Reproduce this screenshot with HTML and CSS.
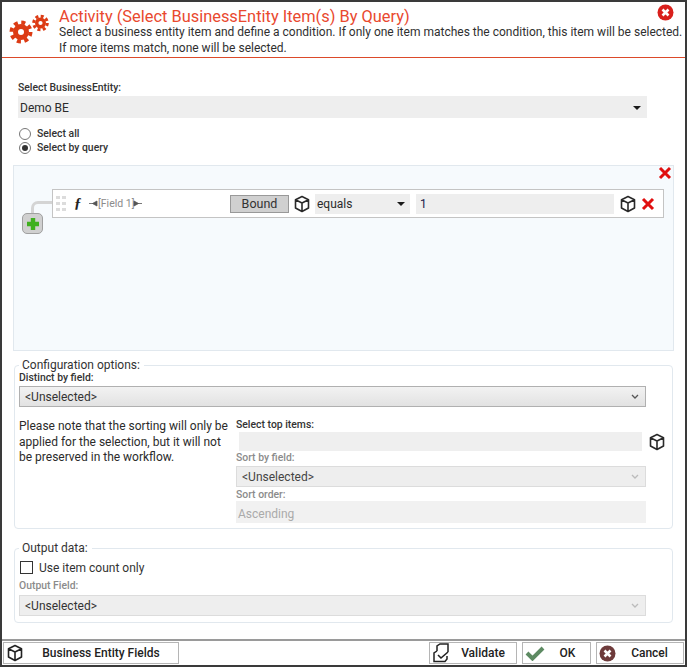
FILE: index.html
```html
<!DOCTYPE html>
<html lang="en">
<head>
<meta charset="utf-8">
<title>Activity</title>
<link rel="stylesheet" href="styles.css">
</head>
<body>
<svg width="0" height="0" class="defs">
  <symbol id="cube" viewBox="0 0 18 18"><path d="M9 1.500 15.500 4.800V13L9 16.500 2.500 13V4.800ZM3 5 9 8 15 5M9 8V16.500" fill="none" stroke="currentColor" stroke-width="1.600" stroke-linejoin="round"/></symbol>
  <symbol id="redx" viewBox="0 0 14 14"><path d="M2 2 12 12M12 2 2 12" fill="none" stroke="#e00f0f" stroke-width="3"/></symbol>
  <symbol id="chev" viewBox="0 0 8 6"><path d="M1 1 4 4 7 1" fill="none" stroke="currentColor" stroke-width="1.300"/></symbol>
  <symbol id="pin-r" viewBox="0 0 9 7"><path d="M0 3.500H5M3.500 3.500 8 1V6Z" fill="#555" stroke="#555" stroke-width=".8"/></symbol>
  <symbol id="pin-l" viewBox="0 0 9 7"><path d="M9 3.500H4M5.500 3.500 1 1V6Z" fill="#555" stroke="#555" stroke-width=".8"/></symbol>
</svg>
<div class="window">
  <header class="head">
    <svg class="gears" width="50" height="36" viewBox="0 0 50 36">
      <g fill="none" stroke="#dc3b14">
        <circle cx="13" cy="21" r="5.500" stroke-width="5"/>
        <circle cx="13" cy="21" r="9.500" stroke-width="4" stroke-dasharray="4 3.460"/>
        <circle cx="32.500" cy="12" r="3.800" stroke-width="3.400"/>
        <circle cx="32.500" cy="12" r="6.800" stroke-width="3" stroke-dasharray="3 2.340"/>
      </g>
    </svg>
    <div class="head-text">
      <h1 class="title">Activity (Select BusinessEntity Item(s) By Query)</h1>
      <p class="desc">Select a business entity item and define a condition. If only one item matches the condition, this item will be selected. If more items match, none will be selected.</p>
    </div>
    <svg class="close" width="17" height="17" viewBox="0 0 17 17"><circle cx="8.500" cy="8.500" r="8" fill="#d9201c"/><path d="M5.500 5.500 11.500 11.500M11.500 5.500 5.500 11.500" stroke="#fff" stroke-width="2.600"/></svg>
  </header>

  <main class="body">
    <label class="lbl">Select BusinessEntity:</label>
    <div class="flat-select be"><span>Demo BE</span><i class="caret"></i></div>
    <div class="radios">
      <div class="radio-row"><span class="radio"></span><span class="lbl">Select all</span></div>
      <div class="radio-row"><span class="radio on"></span><span class="lbl">Select by query</span></div>
    </div>

    <section class="query">
      <svg class="panel-x" width="14" height="14"><use href="#redx"/></svg>
      <div class="qrow-wrap">
        <div class="connector"></div>
        <div class="add"><svg width="16" height="16" viewBox="0 0 16 16"><path d="M8 2V14M2 8H14" stroke="#3fb01f" stroke-width="4.400"/></svg></div>
        <div class="qrow">
          <svg class="grip" width="10" height="15" viewBox="0 0 10 15"><path d="M0 0H4V3H0ZM6 0H10V3H6ZM0 6H4V9H0ZM6 6H10V9H6ZM0 12H4V15H0ZM6 12H10V15H6Z" fill="#dcdcdc"/></svg>
          <span class="fx">ƒ</span>
          <span class="field"><svg class="pin" width="9" height="7"><use href="#pin-r"/></svg>[Field 1]<svg class="pin" width="9" height="7"><use href="#pin-l"/></svg></span>
          <span class="bound">Bound</span>
          <svg class="cube" width="18" height="18"><use href="#cube"/></svg>
          <div class="flat-select op"><span>equals</span><i class="caret"></i></div>
          <div class="value">1</div>
          <svg class="cube" width="18" height="18"><use href="#cube"/></svg>
          <svg class="row-x" width="14" height="14"><use href="#redx"/></svg>
        </div>
      </div>
    </section>

    <fieldset class="group config">
      <legend>Configuration options:</legend>
      <label class="lbl tight">Distinct by field:</label>
      <div class="combo"><span>&lt;Unselected&gt;</span><svg width="8" height="6" class="chev"><use href="#chev"/></svg></div>
      <div class="split">
        <p class="note">Please note that the sorting will only be applied for the selection, but it will not be preserved in the workflow.</p>
        <div class="side">
          <label class="lbl">Select top items:</label>
          <div class="top-row"><div class="input"></div><svg class="cube" width="18" height="18"><use href="#cube"/></svg></div>
          <label class="lbl dim">Sort by field:</label>
          <div class="combo off"><span>&lt;Unselected&gt;</span><svg width="8" height="6" class="chev"><use href="#chev"/></svg></div>
          <label class="lbl dim order-lbl">Sort order:</label>
          <div class="input order">Ascending</div>
        </div>
      </div>
    </fieldset>

    <fieldset class="group output">
      <legend>Output data:</legend>
      <div class="check-row"><span class="check"></span><span>Use item count only</span></div>
      <label class="lbl dim">Output Field:</label>
      <div class="combo off"><span>&lt;Unselected&gt;</span><svg width="8" height="6" class="chev"><use href="#chev"/></svg></div>
    </fieldset>
  </main>

  <footer class="foot">
    <button class="btn fields"><svg class="ico" width="18" height="18"><use href="#cube"/></svg><span>Business Entity Fields</span></button>
    <span class="spacer"></span>
    <button class="btn validate"><svg class="ico" width="18" height="20" viewBox="0 0 18 20"><path d="M5 8V3L8 1H16V9M5 8 2 10V18.500H13L15 16V13" fill="none" stroke="#222" stroke-width="1.500"/><path d="M6 12 9 15 16 9" fill="none" stroke="#222" stroke-width="1.600"/></svg><span>Validate</span></button>
    <button class="btn ok"><svg class="ico" width="20" height="16" viewBox="0 0 20 16"><path d="M2 8 7.500 13.500 18 3" fill="none" stroke="#5d8a62" stroke-width="4"/></svg><span>OK</span></button>
    <button class="btn cancel"><svg class="ico" width="17" height="17" viewBox="0 0 17 17"><circle cx="8.500" cy="8.500" r="8" fill="#6e3b3b"/><path d="M5.500 5.500 11.500 11.500M11.500 5.500 5.500 11.500" stroke="#fff" stroke-width="2.600"/></svg><span>Cancel</span></button>
  </footer>
</div>
</body>
</html>
```

FILE: styles.css
```css
* { box-sizing: border-box; }
html, body { margin: 0; padding: 0; background: #fff; }
body { font-family: Roboto, "Noto Sans", sans-serif; font-size: 12px; color: #2b2b2b; width: 688px; height: 668px; overflow: hidden; }
.defs { position: absolute; }
.window { width: 687px; height: 667px; border: 2px solid #3a3a3a; display: flex; flex-direction: column; background: #fff; }

.head { height: 56px; flex: none; display: flex; border-bottom: 1px solid #dc4a2a; position: relative; padding-top: 6px; }
.gears { flex: none; margin: 3px 0 0 6px; }
.head-text { margin-left: 1px; }
.title { margin: 0; font-size: 16.400px; line-height: 17px; font-weight: 400; color: #e9492f; }
.desc { margin: 0; width: 626px; font-size: 12px; line-height: 15.500px; color: #2f2f2f; }
.close { position: absolute; right: 11px; top: 2px; }

.body { flex: 1; display: flex; flex-direction: column; }
.lbl { display: block; font-size: 10.400px; font-weight: 500; line-height: 13px; color: #333; }
.dim { color: #8b8b8b; }
.body > .lbl { margin: 23px 0 0 16px; }

.flat-select { background: #eee; display: flex; align-items: center; justify-content: space-between; }
.caret { width: 0; height: 0; border-left: 4px solid transparent; border-right: 4px solid transparent; border-top: 4px solid #1a1a1a; }
.be { width: 629px; height: 22px; margin: 2px 0 0 16px; padding: 2px 6px 0 2px; }

.radios { margin: 9px 0 0 17px; display: flex; flex-direction: column; gap: 1px; }
.radio-row { height: 13px; display: flex; align-items: center; gap: 6px; }
.radio { width: 12px; height: 12px; border: 1px solid #777; border-radius: 50%; background: #fff; position: relative; }
.radio.on::after { content: ""; position: absolute; inset: 2px; border-radius: 50%; background: #333; }

.query { position: relative; width: 661px; height: 186px; flex: none; margin: 11px 0 0 11px; background: #f6fafd; border: 1px solid #e1e8ee; }
.panel-x { position: absolute; top: 0; right: 1px; }
.qrow-wrap { position: relative; padding: 23px 0 0 38px; }
.qrow { width: 612px; height: 29px; background: #fff; border: 1px solid #c4c4c4; display: flex; align-items: center; padding: 0 9px 0 3px; }
.connector { position: absolute; left: 17px; top: 35px; width: 21px; height: 14px; border: solid #d4d4d4; border-width: 3px 0 0 3px; border-top-left-radius: 7px; }
.add { position: absolute; left: 8px; top: 47px; width: 21px; height: 21px; background: #d0d0d0; border: 1px solid #a0a0a0; border-radius: 5px; display: flex; align-items: center; justify-content: center; }
.grip { flex: none; }
.fx { width: 10px; margin-left: 8px; flex: none; font: italic 700 15px "Liberation Serif", serif; color: #222; }
.field { margin-left: 6px; width: 140px; flex: none; font-size: 10.500px; color: #8b8b8b; white-space: nowrap; display: flex; align-items: center; }
.pin { margin-left: -1px; }
.bound { width: 59px; height: 18px; flex: none; background: #d0d0d0; border: 1px solid #999; text-align: center; line-height: 16px; font-size: 12.500px; color: #333; }
.cube { flex: none; color: #2a2a2a; }
.qrow > .cube { margin-left: 4px; }
.op { width: 95px; height: 20px; margin-left: 4px; padding: 0 5px 0 2px; flex: none; }
.value { width: 198px; height: 20px; margin-left: 6px; flex: none; background: #eee; line-height: 20px; padding-left: 4px; color: #20204a; }
.qrow > .value + .cube { margin-left: 5px; }
.row-x { margin-left: 4px; flex: none; }

.group { margin: 0; padding: 0 4px; border: 1px solid #e1e8ee; border-radius: 4px; min-width: 0; }
.group legend { padding: 0 4px 0 3px; margin-left: 0; font-size: 12px; line-height: 13px; color: #333; }
.config { width: 659px; height: 170px; flex: none; margin: 8px 0 0 12px; }
.output { width: 659px; height: 81px; flex: none; margin: 13px 0 0 12px; }
.tight { line-height: 12px; }
.combo { width: 627px; height: 21px; border: 1px solid #b0b0b0; background: linear-gradient(#f2f2f2, #e2e2e2); display: flex; align-items: center; justify-content: space-between; padding: 0 6px 0 5px; color: #333; margin-top: 2px; }
.chev { color: #555; }
.split { display: flex; margin-top: 9px; }
.note { margin: 3px 0 0; width: 217px; flex: none; line-height: 15.500px; color: #2b2b2b; }
.side { width: 410px; padding-top: 2px; }
.top-row { display: flex; align-items: center; margin-top: 1px; margin-right: -24px; }
.input { height: 19px; background: #efefef; }
.top-row .input { width: 403px; flex: none; margin-left: 3px; }
.top-row .cube { margin-left: 6px; }
.side .dim { margin-top: 0; }
.side .order-lbl { margin-top: 1px; }
.side .combo.off, .output .combo.off { background: #eee; border-color: #dcdcdc; }
.side .combo { width: 410px; margin-top: 2px; color: #444; }
.off .chev { color: #bbb; }
.order { height: 22px; background: #f1f1f1; padding: 2px 0 0 2px; line-height: 22px; color: #aaa; overflow: hidden; }

.check-row { display: flex; align-items: center; gap: 6px; height: 15px; margin-top: 5px; color: #333; }
.check { width: 13px; height: 13px; border: 1px solid #333; background: #fff; margin-left: 1px; }
.output .lbl { margin-top: 4px; }
.output .combo { margin-top: 3px; }

.foot { height: 26px; flex: none; border-top: 2px solid #9a9a9a; background: #fff; display: flex; align-items: flex-start; gap: 5px; padding: 1px 1px 0; }
.spacer { flex: 1; }
.btn { height: 22px; font: 500 12px Roboto, sans-serif; color: #222; background: #fff; border: 1px solid #b5b5b5; display: flex; align-items: center; padding: 0 0 0 2px; }
.btn span { flex: 1; text-align: center; }
.fields { width: 176px; }
.validate { width: 88px; }
.ok { width: 69px; }
.cancel { width: 88px; }
```
